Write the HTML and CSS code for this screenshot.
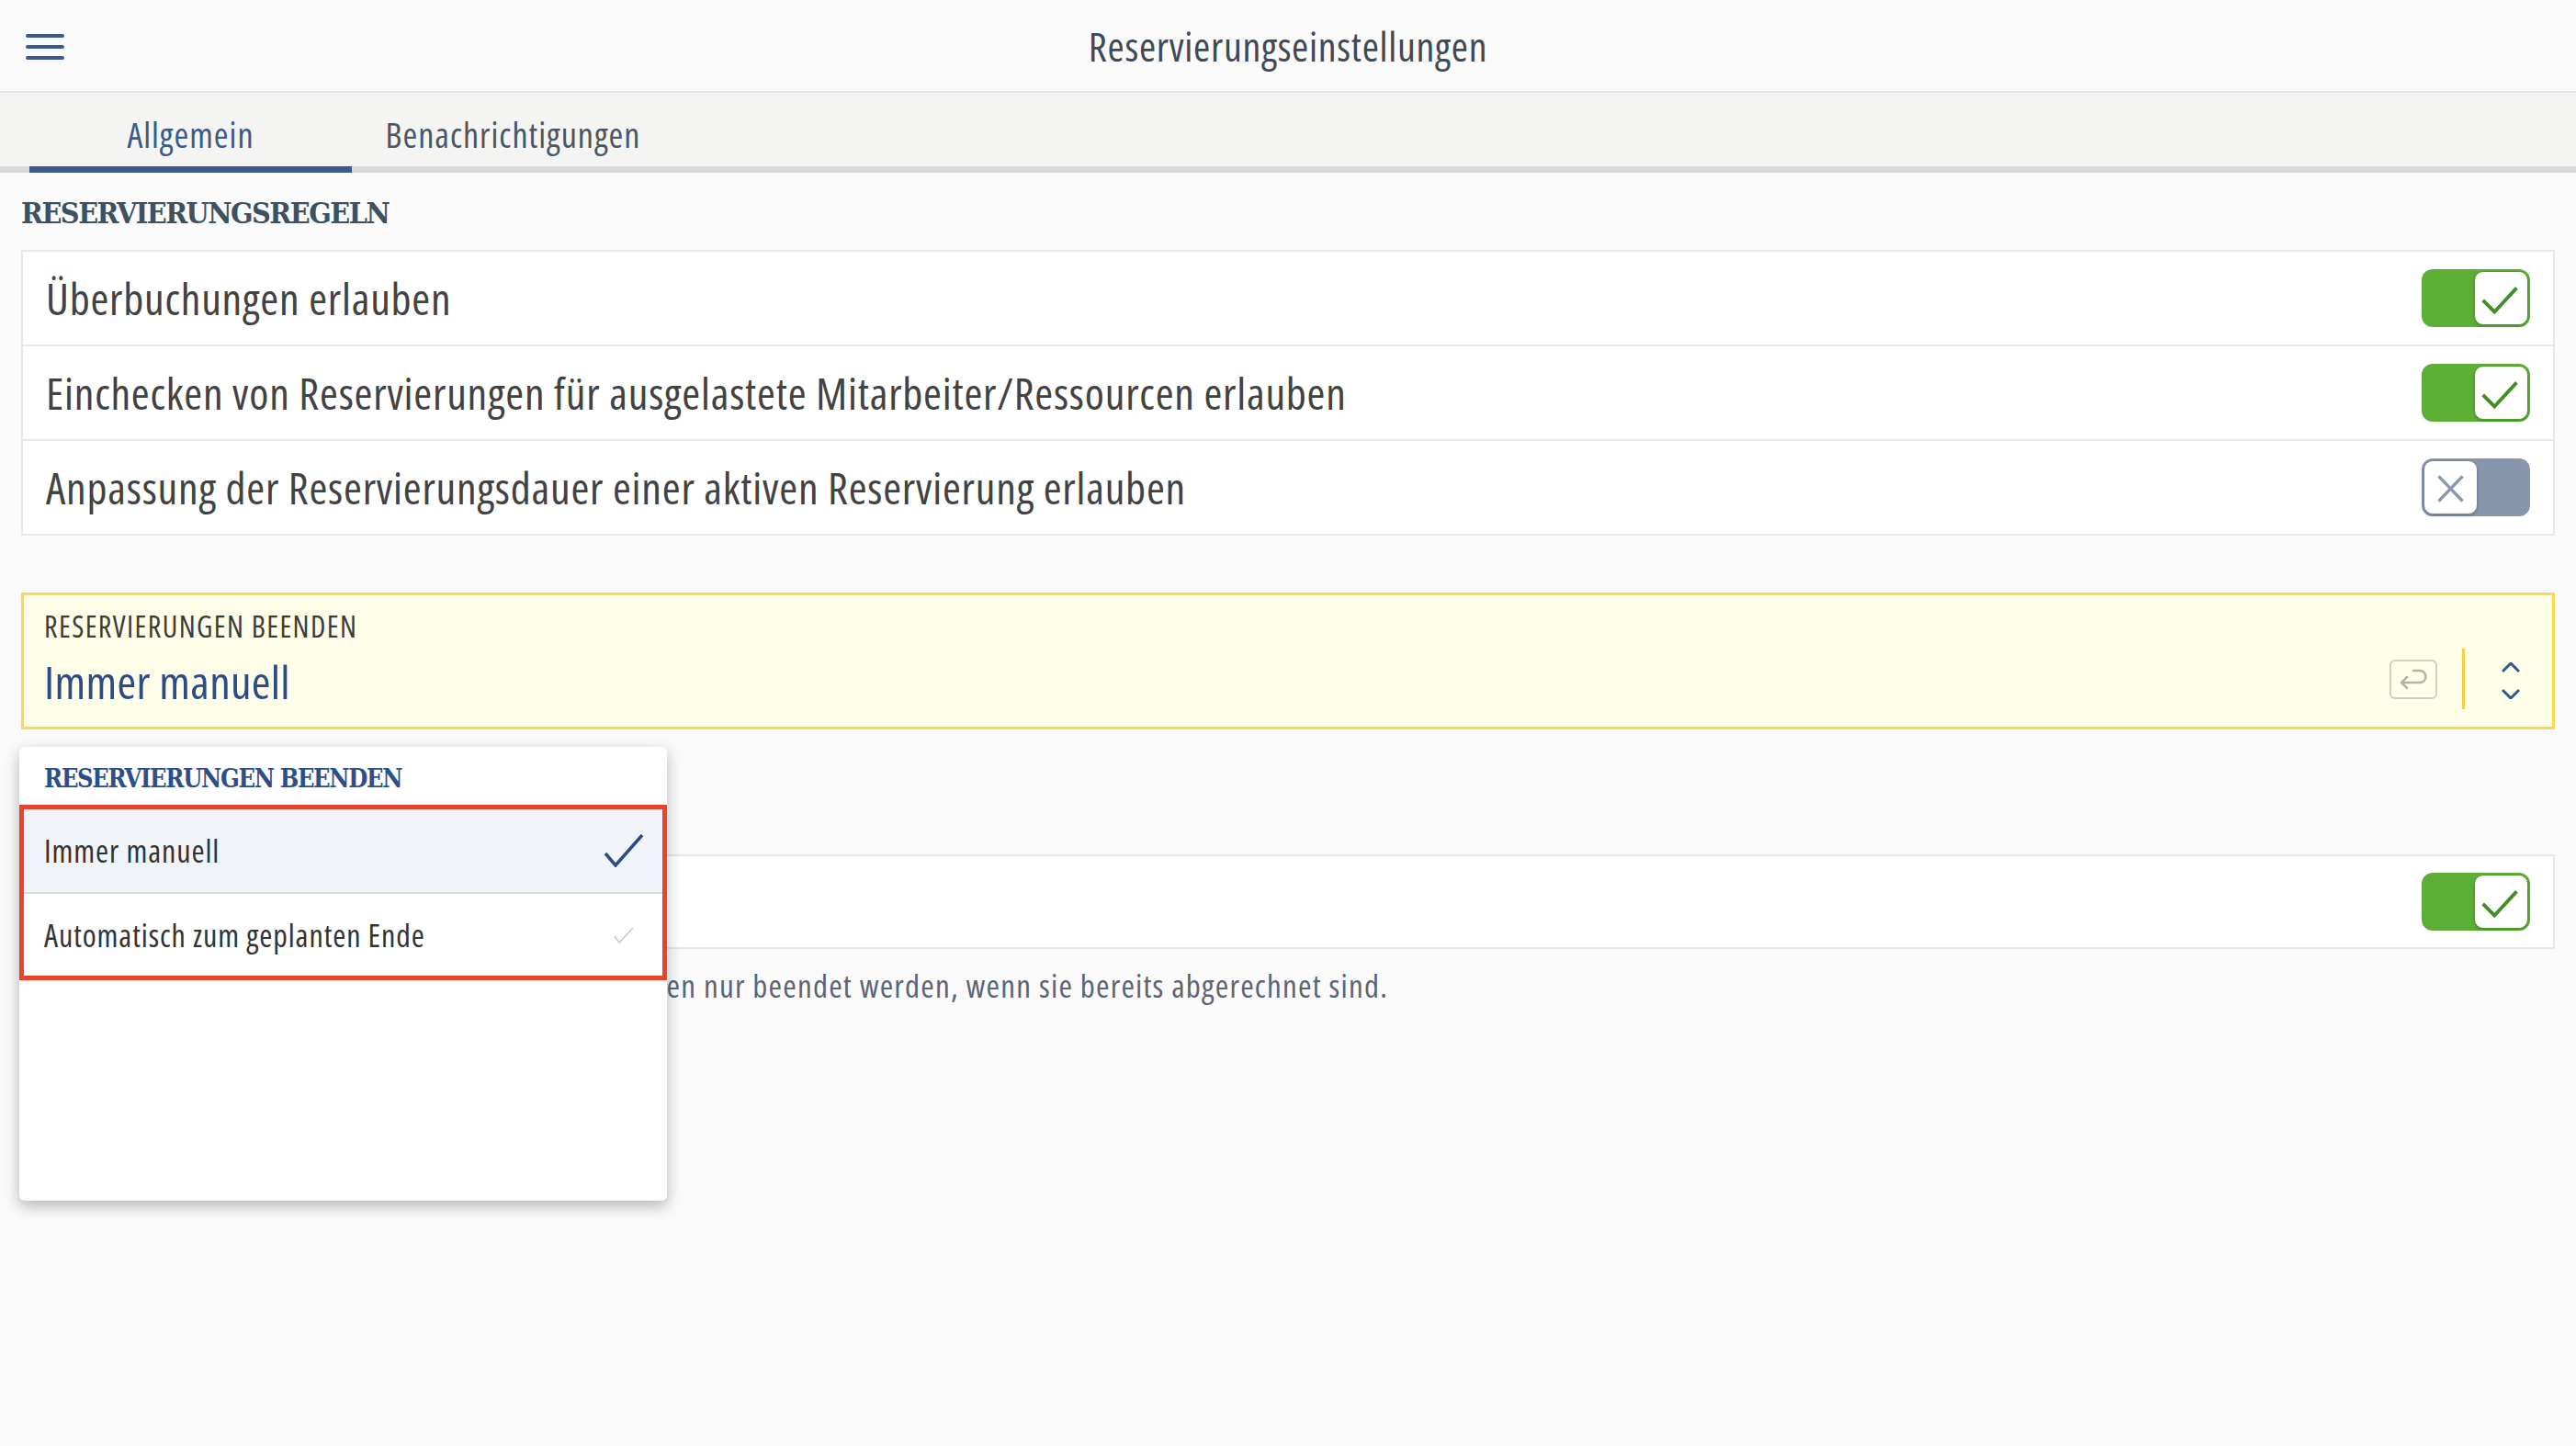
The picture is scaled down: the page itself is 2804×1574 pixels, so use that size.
FILE: index.html
```html
<!DOCTYPE html>
<html lang="de">
<head>
<meta charset="utf-8">
<title>Reservierungseinstellungen</title>
<link rel="stylesheet" href="styles.css">
</head>
<body>
<header class="topbar">
  <div class="menu" aria-label="Menü">
    <svg width="42" height="30" viewBox="0 0 42 30"><path d="M2 3H40M2 15H40M2 27H40" stroke="#3b5a8c" stroke-width="4" stroke-linecap="round"/></svg>
  </div>
  <h1 class="title">Reservierungseinstellungen</h1>
  <div class="spacer"></div>
</header>

<nav class="tabs">
  <div class="tab active">Allgemein</div>
  <div class="tab">Benachrichtigungen</div>
</nav>

<main class="content">
  <h2 class="section-title">RESERVIERUNGSREGELN</h2>
  <div class="card">
    <div class="row">
      <span class="row-label">Überbuchungen erlauben</span>
      <div class="toggle on"><div class="knob"><svg width="57" height="57" viewBox="0 0 59 59"><path d="M9 32L22 45L47 18" fill="none" stroke="#3f9022" stroke-width="4"/></svg></div></div>
    </div>
    <div class="row">
      <span class="row-label">Einchecken von Reservierungen für ausgelastete Mitarbeiter/Ressourcen erlauben</span>
      <div class="toggle on"><div class="knob"><svg width="57" height="57" viewBox="0 0 59 59"><path d="M9 32L22 45L47 18" fill="none" stroke="#3f9022" stroke-width="4"/></svg></div></div>
    </div>
    <div class="row">
      <span class="row-label">Anpassung der Reservierungsdauer einer aktiven Reservierung erlauben</span>
      <div class="toggle off"><div class="knob"><svg width="57" height="57" viewBox="0 0 59 59"><path d="M16 17L43 45M43 17L16 45" fill="none" stroke="#8a98b0" stroke-width="3.5"/></svg></div></div>
    </div>
  </div>

  <div class="select-wrap">
    <div class="select">
      <div class="select-text">
        <div class="select-label">RESERVIERUNGEN BEENDEN</div>
        <div class="select-value">Immer manuell</div>
      </div>
      <div class="select-controls">
        <div class="return-key"><svg width="48" height="39" viewBox="0 0 48 39"><path d="M24 10H31A6.5 6.5 0 0 1 31 23H11M17 17L11 23L17 29" fill="none" stroke="#b7b39f" stroke-width="2.5" stroke-linecap="round" stroke-linejoin="round"/></svg></div>
        <div class="divider"></div>
        <div class="chevrons"><svg width="20" height="40" viewBox="0 0 20 40"><path d="M1 10L10 1L19 10M1 30L10 39L19 30" fill="none" stroke="#2f5a8f" stroke-width="3"/></svg></div>
      </div>
    </div>

    <div class="dropdown">
      <div class="dropdown-title">RESERVIERUNGEN BEENDEN</div>
      <div class="options">
        <div class="option selected">
          <span>Immer manuell</span>
          <span class="check"><svg width="44" height="36" viewBox="0 0 44 36"><path d="M2 21L13 34L42 1" fill="none" stroke="#2b4c86" stroke-width="3.5"/></svg></span>
        </div>
        <div class="option">
          <span>Automatisch zum geplanten Ende</span>
          <span class="check"><svg width="22" height="18" viewBox="0 0 22 18"><path d="M1 10L6 17L21 1" fill="none" stroke="#c9c9c9" stroke-width="1.6"/></svg></span>
        </div>
      </div>
    </div>
  </div>

  <div class="card card-second">
    <div class="row row-end">
      <div class="toggle on"><div class="knob"><svg width="57" height="57" viewBox="0 0 59 59"><path d="M9 32L22 45L47 18" fill="none" stroke="#3f9022" stroke-width="4"/></svg></div></div>
    </div>
  </div>
  <p class="hint">Wenn diese Option aktiviert ist, können Reservierungen nur beendet werden, wenn sie bereits abgerechnet sind.</p>
</main>
</body>
</html>
```
FILE: styles.css
```css
* { box-sizing: border-box; }
html, body { margin: 0; padding: 0; }
body {
  background: #fafafa;
  font-family: "Open Sans", "Noto Sans", sans-serif;
  font-stretch: 75%;
  color: #444;
  width: 2804px;
  height: 1574px;
  overflow: hidden;
}

/* Top bar */
.topbar {
  height: 101px;
  display: grid;
  grid-template-columns: 1fr auto 1fr;
  align-items: center;
  border-bottom: 2px solid #e3e3e3;
  background: #fafafa;
}
.menu { padding-left: 28px; display: flex; align-items: center; padding-top: 2px; }
.title {
  margin: 0;
  font-weight: 400;
  font-size: 44px;
  letter-spacing: 0.7px;
  color: #3f4a57;
}

/* Tabs */
.tabs {
  display: flex;
  height: 87px;
  padding-left: 32px;
  background: #f4f4f2;
  border-bottom: 7px solid #d9d9d9;
}
.tab {
  width: 351px;
  height: 87px;
  margin-bottom: -7px;
  border-bottom: 7px solid transparent;
  display: flex;
  align-items: center;
  justify-content: center;
  padding-top: 10px;
  font-size: 38px;
  letter-spacing: 1px;
  color: #4b5665;
}
.tab.active { color: #3b5a8c; border-bottom-color: #3b5a8c; }

/* Content */
.content { padding: 0 23px; position: relative; }
.section-title {
  margin: 0;
  height: 84px;
  display: flex;
  align-items: center;
  font-family: "DejaVu Serif Condensed", "DejaVu Serif", serif;
  font-stretch: normal;
  font-weight: 700;
  font-size: 32px;
  letter-spacing: -1.5px;
  color: #3d5260;
  padding-top: 4px;
}

.card {
  background: #fff;
  border: 2px solid #e8e8e8;
}
.row {
  height: 101px;
  display: flex;
  align-items: center;
  justify-content: space-between;
  padding: 0 25px;
}
.row + .row { border-top: 2px solid #e8e8e8; height: 103px; }
.row-end { justify-content: flex-end; }
.row-label {
  font-size: 48px;
  letter-spacing: 0.8px;
  color: #424242;
  white-space: nowrap;
}

/* Toggle */
.toggle {
  width: 118px;
  height: 63px;
  border-radius: 12px;
  display: flex;
  align-items: center;
  padding: 2px;
}
.toggle.on { background: #5dae35; justify-content: flex-end; }
.toggle.off { background: #8796ad; justify-content: flex-start; }
.knob {
  width: 59px;
  height: 59px;
  background: #fff;
  border-radius: 10px;
  display: flex;
  align-items: center;
  justify-content: center;
  box-shadow: 0 2px 3px rgba(0,0,0,0.18);
}
.toggle.on .knob { border: 1px solid #4c9a2b; }
.toggle.off .knob { border: 1px solid #7483a0; }

/* Select */
.select-wrap { position: relative; margin-top: 62px; }
.select {
  height: 149px;
  background: #ffffe9;
  border: 3px solid #fbd94f;
  display: flex;
  align-items: flex-start;
  padding: 17px 35px 0 22px;
}
.select-text { flex: 1; }
.select-label {
  font-size: 32px;
  line-height: 34px;
  letter-spacing: 1.4px;
  color: #3b3b3b;
}
.select-value {
  margin-top: 15px;
  font-size: 50px;
  line-height: 56px;
  letter-spacing: 0.3px;
  color: #2b4c86;
}
.select-controls {
  align-self: flex-end;
  margin-bottom: 19px;
  height: 66px;
  display: flex;
  align-items: center;
}
.return-key {
  width: 52px;
  height: 43px;
  border: 2px solid #d3cfbb;
  border-radius: 6px;
  display: flex;
  align-items: center;
  justify-content: center;
  margin-top: 1px;
}
.divider {
  width: 3px;
  height: 66px;
  background: #f8cd3f;
  margin-left: 27px;
  margin-right: 40px;
}
.chevrons { display: flex; align-items: center; margin-top: 4px; }

/* Dropdown overlay */
.dropdown {
  position: absolute;
  top: 168px;
  left: -2px;
  width: 705px;
  height: 494px;
  background: #fff;
  border-radius: 6px;
  box-shadow: 0 6px 16px rgba(0,0,0,0.28);
  z-index: 10;
}
.dropdown-title {
  height: 63px;
  display: flex;
  align-items: center;
  padding-left: 27px;
  padding-top: 6px;
  font-family: "DejaVu Serif Condensed", "DejaVu Serif", serif;
  font-stretch: normal;
  font-weight: 700;
  font-size: 27px;
  letter-spacing: -1.3px;
  color: #2d4f88;
}
.options { border: 5px solid #e8432b; }
.option {
  height: 90px;
  display: flex;
  align-items: center;
  justify-content: space-between;
  padding: 0 20px 0 22px;
  font-size: 34px;
  letter-spacing: 0.9px;
  color: #333;
}
.option.selected { background: #f0f3f7; border-bottom: 2px solid #dadada; height: 92px; }
.option + .option { height: 89px; }
.check { width: 44px; display: flex; justify-content: center; align-items: center; }

.card-second { margin-top: 136px; }
.card-second .row { height: 99px; }

.hint {
  margin: 20px 0 0;
  padding-left: 2px;
  font-size: 35px;
  line-height: 40px;
  letter-spacing: 1.21px;
  color: #5a6577;
  white-space: nowrap;
}
```
